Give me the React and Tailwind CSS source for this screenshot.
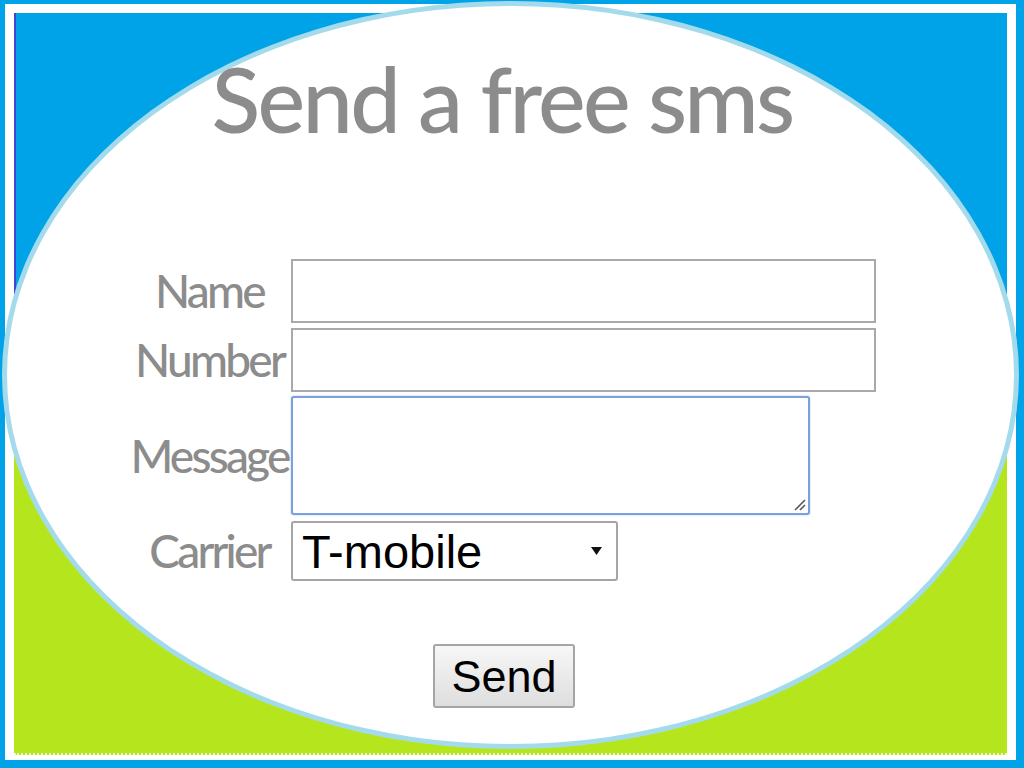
export default function App() {
  const labelCls =
    "flex items-center justify-center text-[#8c8c8c] text-[46px] font-medium tracking-[-0.06em] leading-none";
  const font = { fontFamily: "Lato, 'Open Sans', sans-serif" };
  return (
    <div className="relative w-[1024px] h-[768px] overflow-hidden bg-[#00a2e8]">
      {/* frame */}
      <div className="w-full h-full pl-[5px] pt-[4px] pr-[8px] pb-[8px]">
        <div className="w-full h-full bg-white pl-[9px] pt-[9px] pr-[9px] pb-[5px]">
          <div className="w-full h-full flex flex-col">
            <div className="h-[442px] bg-[#00a2e8] border-l-2 border-[#3f48cc]" />
            <div className="flex-1 bg-[#b5e61d] border-b-2 border-dotted border-[#eef7c8]" />
          </div>
        </div>
      </div>

      {/* ellipse */}
      <div className="absolute left-[2px] top-[1px] w-[1017px] h-[748px] rounded-[50%] border-[5px] border-[#a3dbec] bg-white" />

      {/* content */}
      <div className="absolute inset-0 flex flex-col items-start pt-[53px]">
        <div
          className="w-[1004px] text-center text-[90px] font-medium leading-none text-[#8c8c8c] tracking-[-0.03em]"
          style={font}
        >
          Send a free sms
        </div>

        <div className="ml-[133px] mt-[116px] grid grid-cols-[153px_585px] gap-x-[5px]" style={font}>
          <div className={labelCls + " h-[64px]"}>Name</div>
          <div className="h-[64px] border-2 border-[#a9a9a9] bg-white" />

          <div className={labelCls + " h-[64px] mt-[5px]"}>Number</div>
          <div className="h-[64px] mt-[5px] border-2 border-[#a9a9a9] bg-white" />

          <div className={labelCls + " h-[119px] mt-[4px]"}>Message</div>
          <div className="mt-[4px] w-[519px] h-[119px] relative border-2 border-[#7ba1dc] rounded-[3px] bg-white shadow-[0_0_2px_#a9c3ec]">
            <svg className="absolute right-[2px] bottom-[2px]" width="14" height="14" viewBox="0 0 14 14">
              <line x1="3" y1="13" x2="13" y2="3" stroke="#555" strokeWidth="1.6" />
              <line x1="8" y1="13" x2="13" y2="8" stroke="#555" strokeWidth="1.6" />
            </svg>
          </div>

          <div className={labelCls + " h-[60px] mt-[6px]"}>Carrier</div>
          <div
            className="mt-[6px] w-[327px] h-[60px] flex items-center justify-between pl-[9px] pr-[14px] border-2 border-[#a5a5a5] rounded-[3px] bg-white text-black text-[47px] leading-none"
            style={{ fontFamily: "'Liberation Sans', Arial, sans-serif" }}
          >
            <span>T-mobile</span>
            <svg width="11" height="8" viewBox="0 0 11 8">
              <polygon points="0,0 11,0 5.5,8" fill="#111" />
            </svg>
          </div>
        </div>

        <button
          className="ml-[433px] mt-[63px] w-[142px] h-[64px] flex items-center justify-center border-2 border-[#a5a5a5] rounded-[3px] bg-gradient-to-b from-[#f7f7f7] to-[#dedede] text-black text-[45px] leading-none"
          style={{ fontFamily: "'Liberation Sans', Arial, sans-serif" }}
        >
          Send
        </button>
      </div>
    </div>
  );
}
